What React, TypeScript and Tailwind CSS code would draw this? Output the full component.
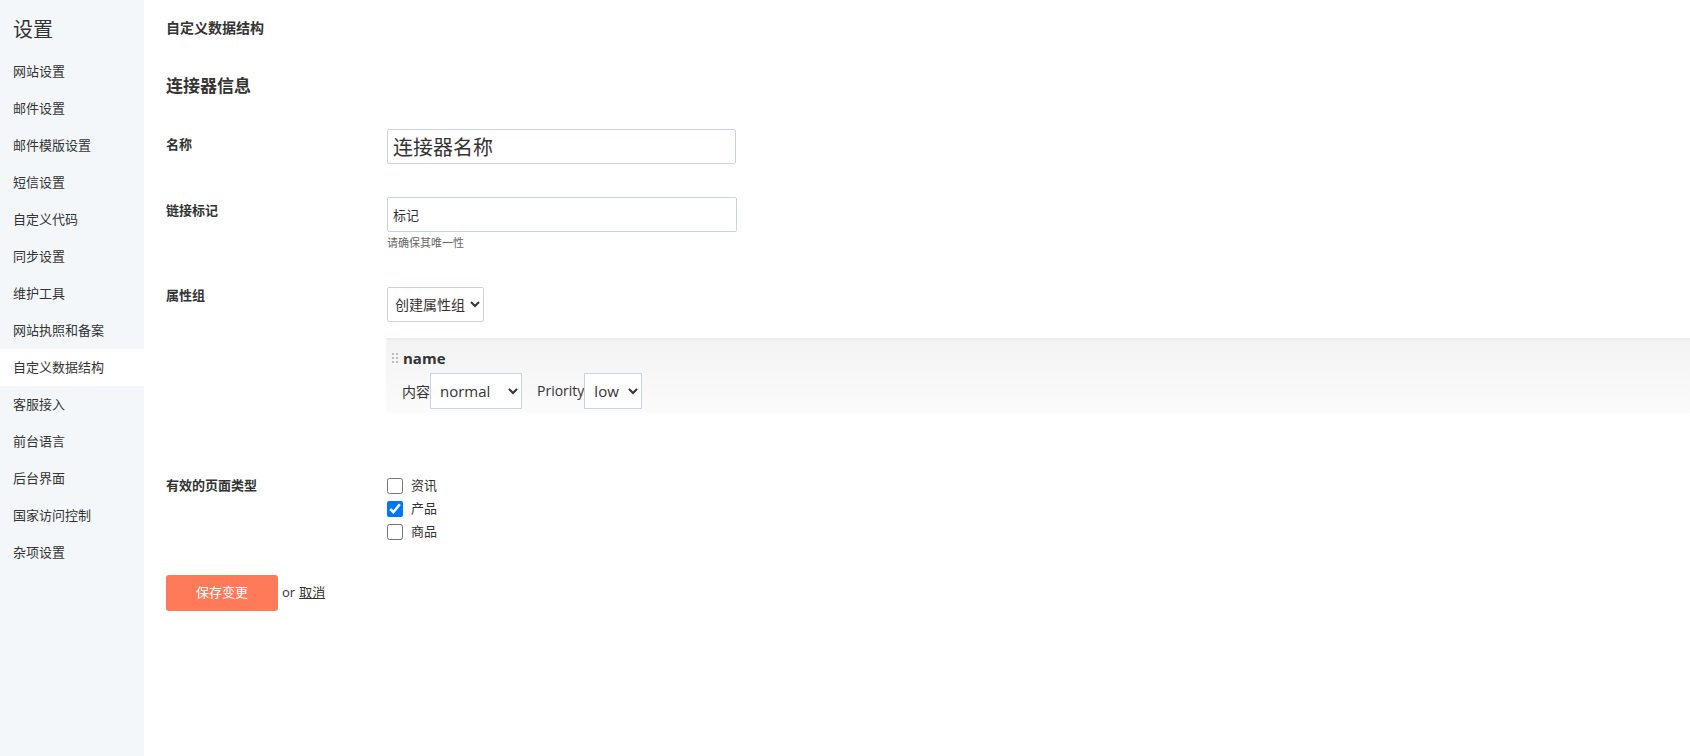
import { useState } from "react";

const menu = [
  "网站设置",
  "邮件设置",
  "邮件模版设置",
  "短信设置",
  "自定义代码",
  "同步设置",
  "维护工具",
  "网站执照和备案",
  "自定义数据结构",
  "客服接入",
  "前台语言",
  "后台界面",
  "国家访问控制",
  "杂项设置",
];

const font = "font-['Open_Sans','Noto_Sans_CJK_SC',sans-serif]";

export default function App() {
  const [types, setTypes] = useState<Record<string, boolean>>({ 资讯: false, 产品: true, 商品: false });

  return (
    <div className={`flex w-[1690px] h-[756px] bg-white text-[#333] ${font}`}>
      <aside className="w-[144px] shrink-0 bg-[#f3f7fa]">
        <div className="pl-[13px] pt-[16px] pb-[9px] text-[20px] leading-[28px] text-[#333]">设置</div>
        {menu.map((m) => (
          <div
            key={m}
            className={`h-[37px] pl-[13px] flex items-center text-[13px] text-[#333] ${m == "自定义数据结构" ? "bg-white" : ""}`}
          >
            {m}
          </div>
        ))}
      </aside>

      <main className="flex-1 pl-[22px] pt-[18px]">
        <div className="text-[14px] leading-[20px] font-bold">自定义数据结构</div>
        <div className="mt-[36px] text-[17px] leading-[24px] font-bold">连接器信息</div>

        <div className="flex mt-[31px]">
          <div className="w-[221px] shrink-0 pt-[5px] text-[13px] leading-[20px] font-bold">名称</div>
          <input
            defaultValue="连接器名称"
            className="w-[349px] h-[35px] px-[5px] border border-[#c9d4e0] rounded-[2px] text-[20px] text-[#333] outline-none"
          />
        </div>

        <div className="flex mt-[33px]">
          <div className="w-[221px] shrink-0 pt-[3px] text-[13px] leading-[20px] font-bold">链接标记</div>
          <div className="flex flex-col">
            <input
              defaultValue="标记"
              className="w-[350px] h-[35px] px-[5px] border border-[#c9d4e0] rounded-[2px] text-[13px] text-[#333] outline-none"
            />
            <div className="mt-[3px] text-[11px] leading-[16px] text-[#666]">请确保其唯一性</div>
          </div>
        </div>

        <div className="flex mt-[36px]">
          <div className="w-[221px] shrink-0 -mt-[2px] text-[13px] leading-[20px] font-bold">属性组</div>
          <div className="flex-1 flex flex-col">
            <select className="self-start w-[97px] h-[35px] pl-[3px] pr-0 border border-[#c9d4e0] rounded-[2px] text-[14px] text-[#333] bg-white outline-none">
              <option>创建属性组</option>
            </select>
            <div className="mt-[16px] -ml-[1px] h-[75px] border-t-2 border-[#ececec] bg-gradient-to-b from-[#f3f3f3] to-[#fbfbfb] pt-[8px]">
              <div className="flex items-center">
                <svg width="16" height="16" viewBox="0 0 16 16" className="ml-[1px]">
                  {[3, 7, 11].map((y) =>
                    [5, 9].map((x) => <rect key={`${x}-${y}`} x={x} y={y} width="2" height="2" fill="#bbb" />)
                  )}
                </svg>
                <span className="text-[15px] leading-[20px] font-bold text-[#333]">name</span>
              </div>
              <div className="flex items-center mt-[5px] pl-[16px] text-[14px]">
                <span className="text-[14px]">内容</span>
                <select className="w-[92px] h-[36px] px-[5px] border border-[#c9d4e0] bg-white text-[15px] text-[#333] outline-none">
                  <option>normal</option>
                </select>
                <span className="ml-[15px] text-[14px] -mt-[1px]">Priority</span>
                <select className="w-[58px] h-[36px] px-[5px] border border-[#c9d4e0] bg-white text-[15px] text-[#333] outline-none">
                  <option>low</option>
                </select>
              </div>
            </div>
          </div>
        </div>

        <div className="flex mt-[65px]">
          <div className="w-[221px] shrink-0 -mt-[3px] text-[13px] leading-[20px] font-bold">有效的页面类型</div>
          <div className="flex flex-col gap-[7px]">
            {Object.keys(types).map((t) => (
              <label key={t} className="flex items-center h-[16px] text-[13px] text-[#333]">
                <input
                  type="checkbox"
                  checked={types[t]}
                  onChange={() => setTypes({ ...types, [t]: !types[t] })}
                  className="w-[16px] h-[16px] m-0 accent-[#0075ff]"
                />
                <span className="ml-[8px]">{t}</span>
              </label>
            ))}
          </div>
        </div>

        <div className="flex items-center mt-[35px]">
          <button className="w-[112px] h-[36px] rounded-[3px] bg-[#ff7a59] text-white text-[13px]">保存变更</button>
          <span className="ml-[4px] text-[13px] text-[#333]">or</span>
          <a className="ml-[4px] text-[13px] text-[#333] underline">取消</a>
        </div>
      </main>
    </div>
  );
}
